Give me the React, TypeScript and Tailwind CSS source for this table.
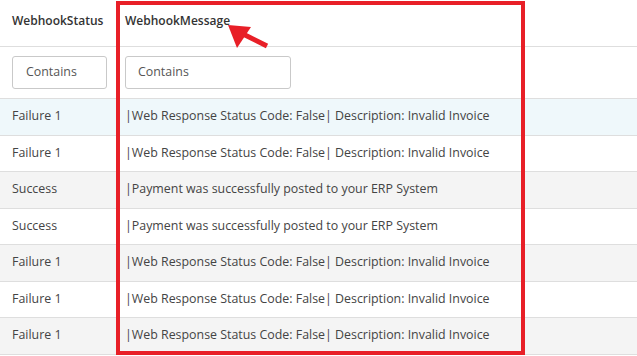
const rows = [
  { status: 'Failure 1', message: '|Web Response Status Code: False| Description: Invalid Invoice', bg: 'bg-[#eff8fb]' },
  { status: 'Failure 1', message: '|Web Response Status Code: False| Description: Invalid Invoice', bg: 'bg-white' },
  { status: 'Success', message: '|Payment was successfully posted to your ERP System', bg: 'bg-[#f4f4f4]' },
  { status: 'Success', message: '|Payment was successfully posted to your ERP System', bg: 'bg-white' },
  { status: 'Failure 1', message: '|Web Response Status Code: False| Description: Invalid Invoice', bg: 'bg-[#f4f4f4]' },
  { status: 'Failure 1', message: '|Web Response Status Code: False| Description: Invalid Invoice', bg: 'bg-white' },
  { status: 'Failure 1', message: '|Web Response Status Code: False| Description: Invalid Invoice', bg: 'bg-[#f4f4f4]' },
];

export default function App() {
  return (
    <div className="relative w-[637px] h-[356px] overflow-hidden bg-white font-['Open_Sans',sans-serif] text-[12.4px] text-[#444]">
      {/* header */}
      <div className="grid grid-cols-[113px_1fr] h-[47px] items-center pb-[5px] border-b border-[#dedede] text-[12px] font-semibold text-[#333]">
        <div className="pl-3">WebhookStatus</div>
        <div className="pl-3">WebhookMessage</div>
      </div>

      {/* filters */}
      <div className="grid grid-cols-[113px_1fr] h-[52px] items-center border-b border-[#dedede]">
        <div className="pl-3">
          <div className="w-[95px] h-[33px] border border-[#c9c9c9] rounded-[3px] flex items-center pl-[13px] text-[#555]">Contains</div>
        </div>
        <div className="pl-3">
          <div className="w-[166px] h-[33px] border border-[#c9c9c9] rounded-[3px] flex items-center pl-[12px] text-[#555]">Contains</div>
        </div>
      </div>

      {rows.map((r, i) => (
        <div key={i} className={`grid grid-cols-[113px_1fr] h-[36.5px] items-center border-b border-[#dedede] ${r.bg}`}>
          <div className="pl-3">{r.status}</div>
          <div className="pl-3 whitespace-nowrap">{r.message}</div>
        </div>
      ))}

      {/* highlight box */}
      <div className="absolute left-[116px] top-[1px] w-[409px] h-[354px] border-4 border-[#e81f27] pointer-events-none" />

      {/* arrow */}
      <svg className="absolute left-0 top-0 pointer-events-none" width="637" height="356">
        <line x1="267" y1="46" x2="241" y2="33" stroke="#e81f27" strokeWidth="5" />
        <polygon points="228,25 251,27 237,48" fill="#e81f27" />
      </svg>
    </div>
  );
}
